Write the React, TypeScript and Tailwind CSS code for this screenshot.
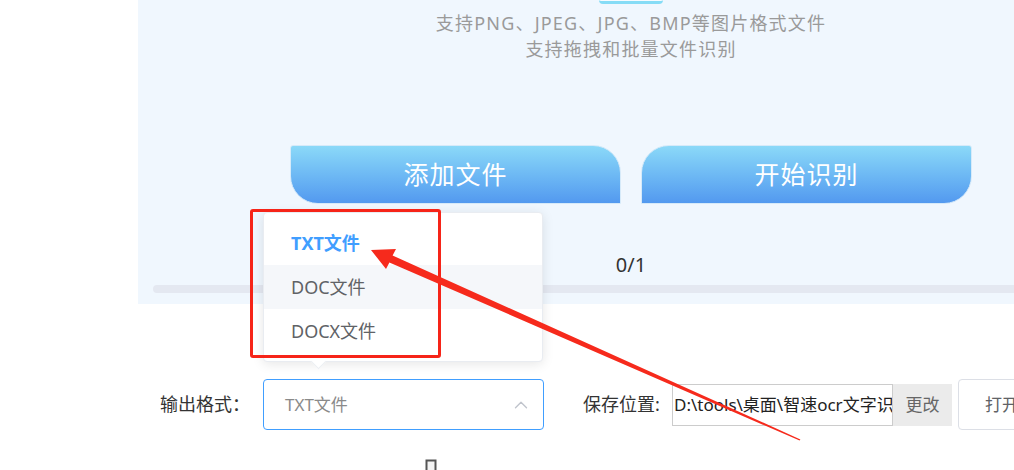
import { ChevronUp } from 'lucide-react'

const items = [
  { label: 'TXT文件', active: true, hover: false },
  { label: 'DOC文件', active: false, hover: true },
  { label: 'DOCX文件', active: false, hover: false },
]

export default function App() {
  return (
    <div className="relative w-[1014px] h-[470px] overflow-hidden bg-white font-['Noto_Sans','Noto_Sans_CJK_SC',sans-serif]">
      {/* upload panel */}
      <div className="ml-[138px] w-[986px] h-[304px] bg-[#f0f7fe] flex flex-col items-center">
        <div className="w-[64px] h-[4px] rounded-b-full border-b-[3px] border-[#86dcf6] bg-[#f7fcff]" />
        <div className="mt-[6px] text-center text-[18px] leading-[26px] tracking-[1.2px] text-[#9a9a9a]">
          <p>支持PNG、JPEG、JPG、BMP等图片格式文件</p>
          <p>支持拖拽和批量文件识别</p>
        </div>

        <div className="mt-[83px] flex gap-[20px]">
          <button className="w-[331px] h-[59px] rounded-tl-[3px] rounded-tr-[28px] rounded-bl-[28px] rounded-br-none border border-[#d6eaf9] bg-linear-to-b from-[#8bd9f8] to-[#5399ef] text-[25px] tracking-[1px] text-white">
            添加文件
          </button>
          <button className="w-[331px] h-[59px] rounded-tl-[28px] rounded-tr-[3px] rounded-br-[28px] rounded-bl-none border border-[#d6eaf9] bg-linear-to-b from-[#8bd9f8] to-[#5399ef] text-[25px] tracking-[1px] text-white">
            开始识别
          </button>
        </div>

        <div className="mt-[49px] h-[24px] leading-[24px] text-[20px] text-[#333]">0/1</div>
        <div className="mt-[8px] self-stretch mx-[15px] h-[8px] rounded-full bg-[#e4e8f1]" />
      </div>

      {/* settings row */}
      <div className="mt-[75px] pl-[160px] flex items-center text-[18px] text-[#333] whitespace-nowrap">
        <span className="shrink-0 w-[103px]">输出格式：</span>
        <div className="relative shrink-0">
          <div className="w-[281px] h-[51px] rounded-[4px] border border-[#409eff] flex items-center justify-between pl-[21px] pr-[11px] text-[17px] text-[#8a8a8a]">
            <span>TXT文件</span>
            <ChevronUp className="w-[22px] h-[22px] text-[#c0c4cc]" strokeWidth={1.5} />
          </div>

          {/* dropdown */}
          <div className="absolute left-0 bottom-[68px] w-[280px] py-[8px] rounded-[4px] border border-[#e9ecf1] bg-white shadow-[0_2px_12px_rgba(0,0,0,0.1)]">
            {items.map((it) => (
              <div
                key={it.label}
                className={`h-[44px] flex items-center pl-[27px] text-[18px] ${
                  it.active ? 'font-bold text-[#409eff]' : 'text-[#606266]'
                } ${it.hover ? 'bg-[#f5f7fa]' : ''}`}
              >
                {it.label}
              </div>
            ))}
            <div className="absolute left-[49px] -bottom-[6px] w-[11px] h-[11px] rotate-45 bg-white border-r border-b border-[#eceff3]" />
          </div>
        </div>

        <span className="shrink-0 ml-[39px] w-[89px]">保存位置:</span>
        <div className="shrink-0 w-[221px] h-[42px] border border-[#cccccc] flex items-center pl-[1px] overflow-hidden text-clip text-[17px] text-[#222]">
          D:\tools\桌面\智速ocr文字识别结果
        </div>
        <button className="shrink-0 w-[59px] h-[42px] bg-[#ebebeb] text-[17px] text-[#666]">更改</button>
        <button className="shrink-0 ml-[6px] w-[120px] h-[51px] rounded-[4px] border border-[#dcdfe6] bg-white pl-[26px] text-left text-[17px] text-[#606266]">
          打开文件夹
        </button>
      </div>

      {/* annotation: red box */}
      <div className="absolute left-[250px] top-[209px] w-[191px] h-[149px] rounded-[3px] border-[3px] border-[#f62418]" />

      {/* annotation: arrow */}
      <svg className="absolute left-0 top-0" width="1014" height="470" viewBox="0 0 1014 470">
        <polygon
          points="371,250 396,249 392.6,255.6 800.4,439.4 799.6,440.6 389.4,262.4 386,269"
          fill="#f62a1c"
        />
      </svg>

      {/* mouse cursor */}
      <svg className="absolute left-[425px] top-[459px]" width="12" height="11" viewBox="0 0 12 11">
        <path d="M1.5 11 V1.5 H10.5 V11" fill="#f4f4f4" stroke="#555" strokeWidth="2" />
      </svg>
    </div>
  )
}
